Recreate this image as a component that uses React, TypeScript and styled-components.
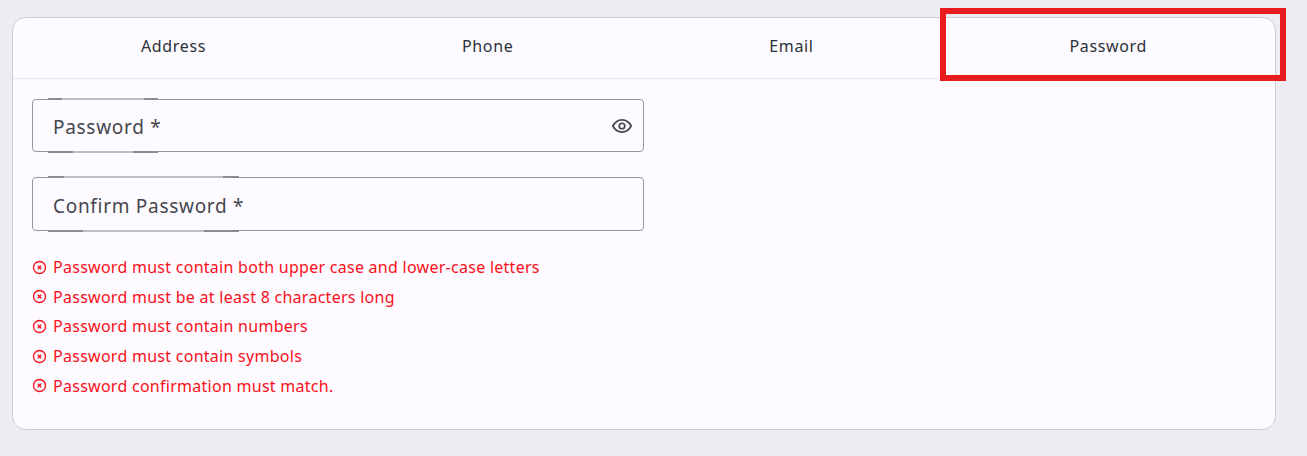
import React from "react";
import styled, { createGlobalStyle } from "styled-components";

const Global = createGlobalStyle`
  html, body { margin: 0; padding: 0; background: #edecf0; }
  body { font-family: "Noto Sans", "Open Sans", sans-serif; width: 1307px; height: 456px; overflow: hidden; }
`;
const Page = styled.div`
  position: relative;
  padding: 17px 31px 0 12px;
`;
const Card = styled.div`
  width: 1264px;
  height: 413px;
  box-sizing: border-box;
  background: #fdfbff;
  border: 1px solid #cfcfd3;
  border-radius: 14px;
`;
const Tabs = styled.div`
  display: flex;
  height: 61px;
  border-bottom: 1px solid #e8e7eb;
  box-sizing: border-box;
`;
const Tab = styled.div`
  flex: 1 1 auto;
  display: flex;
  align-items: center;
  justify-content: center;
  padding-bottom: 4px;
  font-size: 16px;
  letter-spacing: 0.65px;
  color: #2b2f38;
`;
const Body = styled.div`
  padding: 20px 19px 0;
  display: flex;
  flex-direction: column;
`;
const Field = styled.div<{ $h: number }>`
  position: relative;
  width: 612px;
  height: ${(p) => p.$h}px;
  box-sizing: border-box;
  border: 1px solid #96969c;
  border-radius: 4px;
  display: flex;
  align-items: center;
  justify-content: space-between;
  padding: 0 10px 0 20px;
  margin-bottom: 25px;
  font-size: 19px;
  letter-spacing: 0.7px;
  color: #45464e;
`;
const Label = styled.span`
  padding-top: 3px;
`;
const Notch = styled.span<{ $bottom?: boolean; $w: number; $cap: number }>`
  position: absolute;
  left: 15px;
  ${(p) => (p.$bottom ? "bottom: -2px;" : "top: -2px;")}
  width: ${(p) => p.$w}px;
  height: 2px;
  background: linear-gradient(
    to right,
    #8b8b92 ${(p) => p.$cap}px,
    #bfbec4 ${(p) => p.$cap}px,
    #bfbec4 ${(p) => p.$w - p.$cap}px,
    #8b8b92 ${(p) => p.$w - p.$cap}px
  );
`;
const Errors = styled.ul`
  list-style: none;
  margin: 0;
  padding: 0;
  display: flex;
  flex-direction: column;
  gap: 7.7px;
`;
const Err = styled.li`
  display: flex;
  align-items: center;
  gap: 6px;
  height: 22px;
  font-size: 16px;
  letter-spacing: 0.27px;
  color: #fb0f1a;
`;
const Eye = styled.svg`
  width: 22px;
  height: 22px;
  fill: none;
  stroke: #45464e;
  stroke-width: 1.9;
`;
const X = styled.svg`
  width: 15px;
  height: 15px;
  flex: none;
  fill: none;
  stroke: #fb0f1a;
`;
const Highlight = styled.div`
  position: absolute;
  left: 940px;
  top: 8px;
  width: 346px;
  height: 73px;
  box-sizing: border-box;
  border: 6px solid #e81c1f;
`;

const errors = [
  "Password must contain both upper case and lower-case letters",
  "Password must be at least 8 characters long",
  "Password must contain numbers",
  "Password must contain symbols",
  "Password confirmation must match.",
];

export default function App() {
  return (
    <Page>
      <Global />
      <Card>
        <Tabs>
          {["Address", "Phone", "Email", "Password"].map((t) => (
            <Tab key={t}>{t}</Tab>
          ))}
        </Tabs>
        <Body>
          <Field $h={53}>
            <Notch $w={110} $cap={14} />
            <Notch $bottom $w={110} $cap={25} />
            <Label>Password *</Label>
            <Eye viewBox="0 0 24 24">
              <path d="M2 12c2.4-4.4 6-6.600 10-6.600S19.600 7.400 22 12c-2.400 4.600-6 6.600-10 6.600S4.400 16.600 2 12z" />
              <circle cx="12" cy="12" r="3" />
            </Eye>
          </Field>
          <Field $h={54}>
            <Notch $w={191} $cap={16} />
            <Notch $bottom $w={191} $cap={35} />
            <Label>Confirm Password *</Label>
          </Field>
          <Errors>
            {errors.map((e) => (
              <Err key={e}>
                <X viewBox="0 0 15 15">
                  <circle cx="7.500" cy="7.500" r="6" strokeWidth="1.300" />
                  <path d="M5.800 5.800l3.400 3.400M9.200 5.800l-3.400 3.400" strokeWidth="1.300" />
                </X>
                {e}
              </Err>
            ))}
          </Errors>
        </Body>
      </Card>
      <Highlight />
    </Page>
  );
}
